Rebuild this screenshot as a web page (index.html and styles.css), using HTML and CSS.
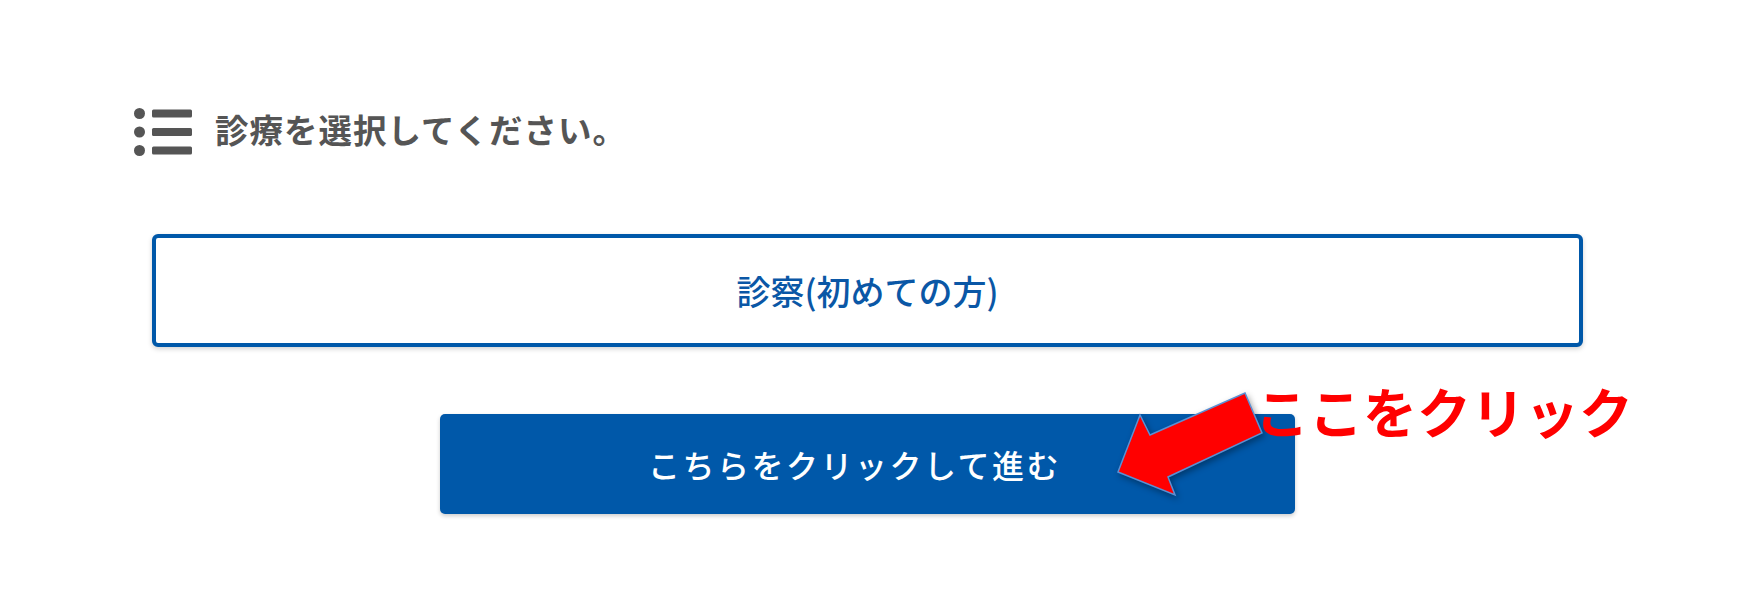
FILE: index.html
```html
<!DOCTYPE html>
<html lang="ja">
<head>
    <meta charset="UTF-8">
    <meta name="viewport" content="width=device-width, initial-scale=1.0">
    <title>診療選択</title>
    <link rel="stylesheet" href="styles.css">
</head>
<body>
    <div class="page">
        <div class="section-title">
            <svg class="list-icon" viewBox="0 0 58 48" width="58" height="48">
                <circle cx="5.5" cy="5.5" r="5.5"/>
                <circle cx="5.5" cy="24" r="5.5"/>
                <circle cx="5.5" cy="42.5" r="5.5"/>
                <rect x="18" y="1.5" width="40" height="8" rx="1.5"/>
                <rect x="18" y="20" width="40" height="8" rx="1.5"/>
                <rect x="18" y="38.5" width="40" height="8" rx="1.5"/>
            </svg>
            <h2>診療を選択してください。</h2>
        </div>

        <div class="choices">
            <label class="choice">診察(初めての方)</label>
        </div>

        <div class="actions">
            <button class="btn-next" type="button">こちらをクリックして進む</button>
        </div>
    </div>

    <!-- click hint drawn over the button -->
    <div class="hint">
        <svg class="hint-arrow" viewBox="0 0 180 130" width="180" height="130">
            <polygon points="18,92 40,35 50,55 145,13 162,53 68,97 75,115"/>
        </svg>
        <span class="hint-text">ここをクリック</span>
    </div>
</body>
</html>
```

FILE: styles.css
```css
:root {
    --blue: #0058a9;
    --gray: #555555;
}

body {
    margin: 0;
    background: #ffffff;
    font-family: "Noto Sans CJK JP", "Noto Sans", sans-serif;
    position: relative;
    min-height: 614px;
}

.page {
    width: 1467px;
    margin-left: 134px;
    padding-top: 108px;
}

.section-title {
    display: flex;
    align-items: center;
    gap: 23px;
    height: 48px;
}

.list-icon {
    fill: var(--gray);
    flex-shrink: 0;
}

.section-title h2 {
    margin: 0;
    font-size: 33.5px;
    font-weight: 700;
    letter-spacing: 1px;
    line-height: 1;
    color: var(--gray);
    position: relative;
    top: -3px;
}

.choices {
    padding: 78px 18px 0;
}

.choice {
    display: flex;
    justify-content: center;
    align-items: center;
    height: 105px;
    border: 4px solid var(--blue);
    border-radius: 6px;
    background: #fff;
    box-shadow: 0 2px 5px rgba(0, 0, 0, 0.18);
    color: #0a57a6;
    font-size: 34px;
    font-weight: 500;
    cursor: pointer;
}

.actions {
    display: flex;
    justify-content: center;
    padding-top: 67px;
}

.btn-next {
    width: 855px;
    height: 100px;
    padding: 0 26px 0 0;
    border: none;
    border-radius: 5px;
    background: var(--blue);
    box-shadow: 0 2px 4px rgba(0, 0, 0, 0.2);
    color: #fff;
    font-family: inherit;
    font-size: 32px;
    font-weight: 500;
    letter-spacing: 2.5px;
    cursor: pointer;
}

.hint {
    position: absolute;
    left: 1100px;
    top: 380px;
    pointer-events: none;
}

.hint-arrow {
    display: block;
    filter: drop-shadow(2px 3px 3px rgba(0, 0, 0, 0.35));
}

.hint-arrow polygon {
    fill: #ff0000;
    stroke: #5a90d4;
    stroke-width: 1.5;
    stroke-linejoin: miter;
}

.hint-text {
    position: absolute;
    left: 155px;
    top: 4px;
    white-space: nowrap;
    font-size: 54px;
    font-weight: 700;
    line-height: 54px;
    color: #ff0000;
}
```
